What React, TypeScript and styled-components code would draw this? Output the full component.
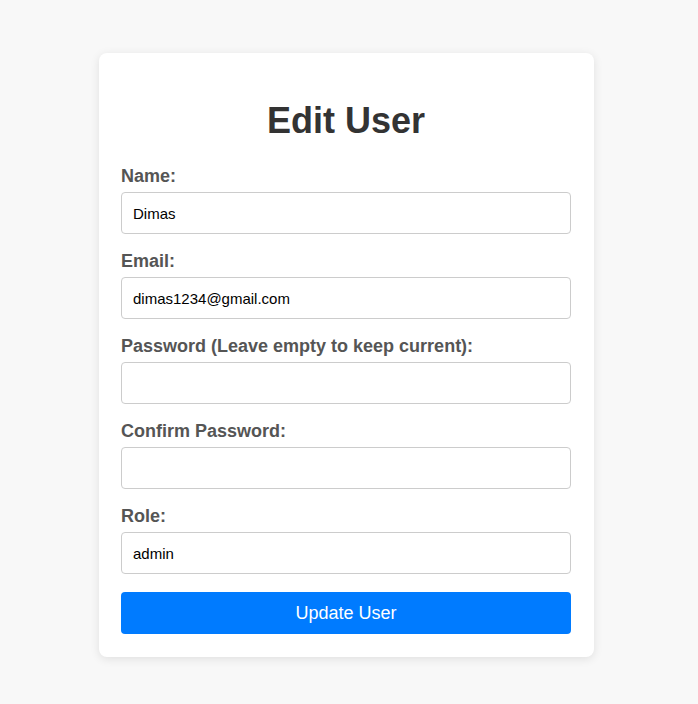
import React from "react";
import styled, { createGlobalStyle } from "styled-components";

const GlobalStyle = createGlobalStyle`
  body {
    margin: 0;
    background-color: #f8f8f8;
    font-family: "Liberation Sans", Arial, sans-serif;
  }
`;

const Page = styled.div`
  display: flex;
  justify-content: flex-start;
  padding: 53px 0 47px 99px;
`;

const Card = styled.div`
  width: 495px;
  box-sizing: border-box;
  padding: 20px 23px 23px 22px;
  background-color: #fff;
  border-radius: 8px;
  box-shadow: 0 2px 10px rgba(0, 0, 0, 0.1);
`;

const Title = styled.h2`
  margin: 27px 0 24px;
  text-align: center;
  font-size: 36px;
  font-weight: 700;
  color: #333;
`;

const Form = styled.form`
  display: flex;
  flex-direction: column;
`;

const Field = styled.div`
  display: flex;
  flex-direction: column;
  margin-bottom: 17px;
`;

const Label = styled.label`
  font-size: 18px;
  font-weight: 700;
  color: #555;
  margin-bottom: 5px;
`;

const Input = styled.input`
  height: 42px;
  box-sizing: border-box;
  padding: 0 11px;
  border: 1px solid #ccc;
  border-radius: 4px;
  font-family: "Liberation Sans", Arial, sans-serif;
  font-size: 15px;
  color: #000;
  outline: none;
`;

const Button = styled.button`
  margin-top: 1px;
  height: 42px;
  border: none;
  border-radius: 4px;
  background-color: #007bff;
  color: #fff;
  font-family: "Liberation Sans", Arial, sans-serif;
  font-size: 18px;
  cursor: pointer;
`;

const fields = [
  { label: "Name:", value: "Dimas", type: "text" },
  { label: "Email:", value: "dimas1234@gmail.com", type: "email" },
  { label: "Password (Leave empty to keep current):", value: "", type: "password" },
  { label: "Confirm Password:", value: "", type: "password" },
  { label: "Role:", value: "admin", type: "text" },
];

export default function App() {
  return (
    <>
      <GlobalStyle />
      <Page>
        <Card>
          <Title>Edit User</Title>
          <Form onSubmit={(e) => e.preventDefault()}>
            {fields.map((f, i) => (
              <Field key={i}>
                <Label>{f.label}</Label>
                <Input type={f.type} defaultValue={f.value} />
              </Field>
            ))}
            <Button type="submit">Update User</Button>
          </Form>
        </Card>
      </Page>
    </>
  );
}
